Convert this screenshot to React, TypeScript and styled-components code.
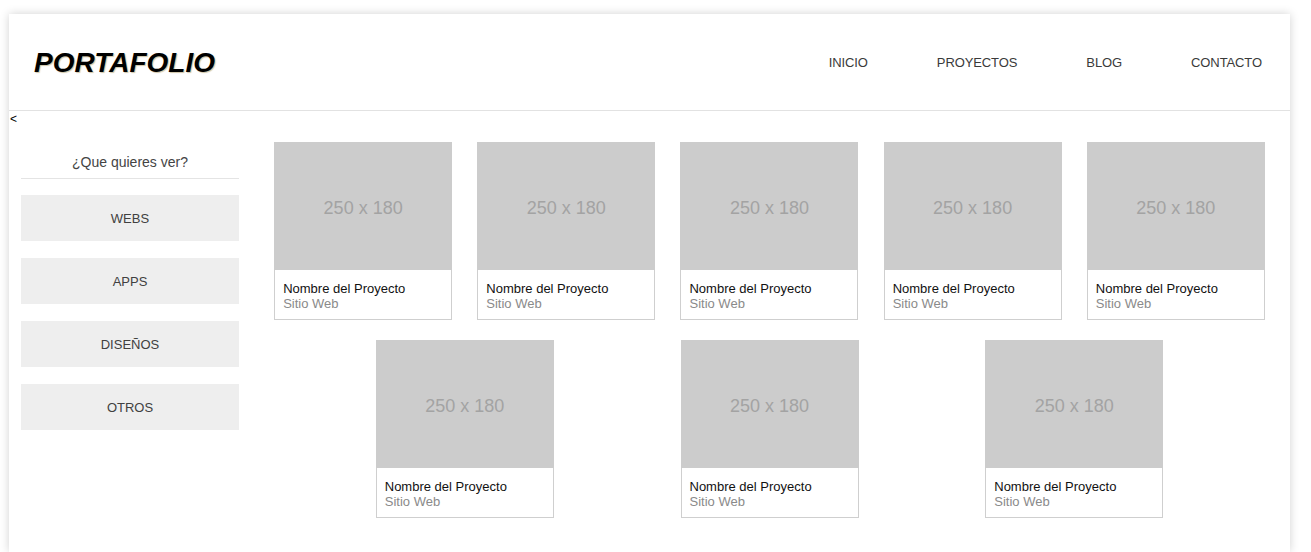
import React from "react";
import styled, { createGlobalStyle } from "styled-components";

const Global = createGlobalStyle`
  html, body { margin: 0; padding: 0; background: #ffffff; }
  body { font-family: "Liberation Sans", Arial, sans-serif; font-size: 13px; color: #333; overflow: hidden; }
  * { box-sizing: border-box; }
`;

const Page = styled.div`
  margin: 14px 0 0 9px;
  width: 1281px;
  min-height: 538px;
  background: #fff;
  box-shadow: 0 0 9px rgba(0, 0, 0, 0.18);
`;

const Header = styled.header`
  height: 97px;
  display: flex;
  align-items: center;
  justify-content: space-between;
  padding: 0 28px 0 25px;
  border-bottom: 1px solid #e2e2e2;
`;

const Logo = styled.h1`
  margin: 0;
  font-size: 28px;
  font-weight: bold;
  font-style: italic;
  color: #000;
  text-shadow: 1px 1px 1px rgba(120, 90, 0, 0.35);
  line-height: 1;
  padding-top: 1px;
`;

const Nav = styled.nav`
  display: flex;
  gap: 69px;
`;

const NavLink = styled.a`
  font-size: 13px;
  color: #3a3a3a;
  text-decoration: none;
  letter-spacing: -0.1px;
`;

const Back = styled.div`
  font-size: 12px;
  line-height: 16px;
  color: #000;
  padding-left: 1px;
  height: 16px;
`;

const Main = styled.div`
  display: flex;
  align-items: flex-start;
  padding-top: 15px;
`;

const Sidebar = styled.aside`
  width: 240px;
  flex: none;
  padding: 0 10px 0 12px;
`;

const SideTitle = styled.div`
  text-align: center;
  font-size: 14px;
  line-height: 16px;
  color: #444;
  padding: 12px 0 8px;
  border-bottom: 1px solid #e4e4e4;
`;

const FilterList = styled.div`
  display: flex;
  flex-direction: column;
  gap: 17px;
  margin-top: 16px;
`;

const FilterButton = styled.div`
  height: 46px;
  background: #eeeeee;
  display: flex;
  align-items: center;
  justify-content: center;
  font-size: 13px;
  color: #404040;
`;

const Grid = styled.div`
  flex: 1;
  display: flex;
  flex-wrap: wrap;
  justify-content: space-evenly;
  row-gap: 20px;
`;

const Card = styled.div`
  width: 178px;
`;

const Thumb = styled.div`
  height: 128px;
  background: #cccccc;
  display: flex;
  align-items: center;
  justify-content: center;
  padding-top: 5px;
  font-size: 18px;
  color: #a3a3a3;
`;

const Caption = styled.div`
  height: 50px;
  border: 1px solid #cfcfcf;
  border-top: none;
  padding: 11px 8px 0;
  line-height: 15px;
  font-size: 13px;
`;

const Name = styled.div`
  color: #111;
`;

const Kind = styled.div`
  color: #8a8a8a;
`;

const navItems = ["INICIO", "PROYECTOS", "BLOG", "CONTACTO"];
const filters = ["WEBS", "APPS", "DISEÑOS", "OTROS"];

export default function App() {
  return (
    <>
      <Global />
      <Page>
        <Header>
          <Logo>PORTAFOLIO</Logo>
          <Nav>
            {navItems.map((n) => (
              <NavLink key={n} href="#">
                {n}
              </NavLink>
            ))}
          </Nav>
        </Header>
        <Back>&lt;</Back>
        <Main>
          <Sidebar>
            <SideTitle>¿Que quieres ver?</SideTitle>
            <FilterList>
              {filters.map((f) => (
                <FilterButton key={f}>{f}</FilterButton>
              ))}
            </FilterList>
          </Sidebar>
          <Grid>
            {Array.from({ length: 8 }).map((_, i) => (
              <Card key={i}>
                <Thumb>250 x 180</Thumb>
                <Caption>
                  <Name>Nombre del Proyecto</Name>
                  <Kind>Sitio Web</Kind>
                </Caption>
              </Card>
            ))}
          </Grid>
        </Main>
      </Page>
    </>
  );
}
